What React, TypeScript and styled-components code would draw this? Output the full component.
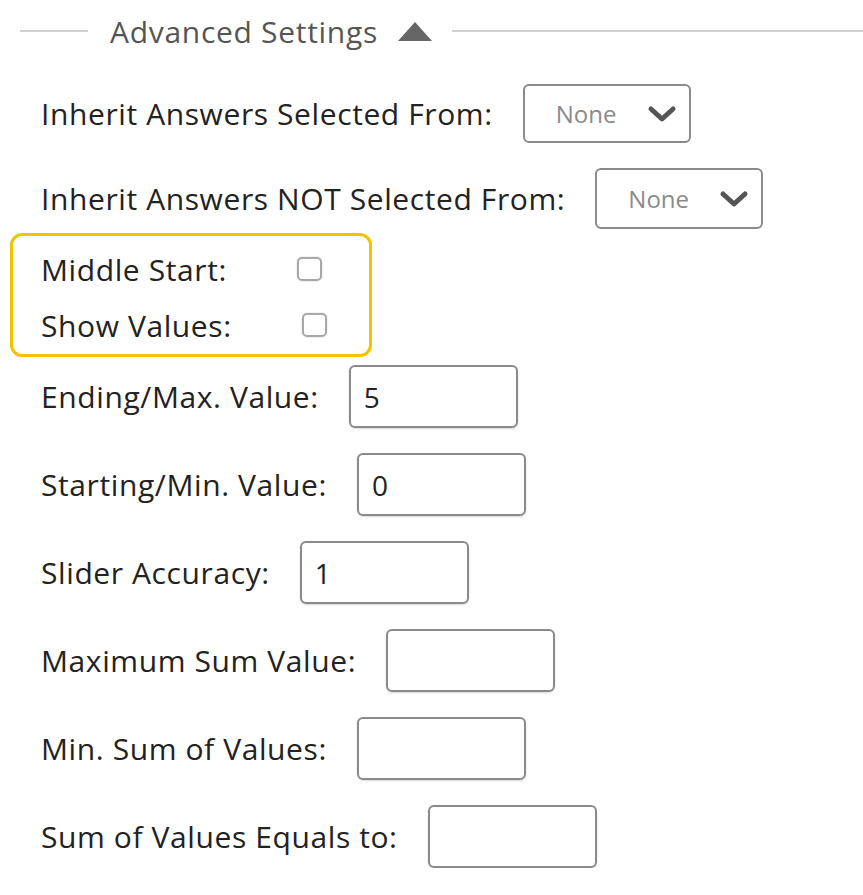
import React from 'react';
import styled, { createGlobalStyle } from 'styled-components';

const GlobalStyle = createGlobalStyle`
  body {
    margin: 0;
    background: #fff;
    font-family: "Open Sans", "Noto Sans", sans-serif;
    color: #222;
  }
`;

const Page = styled.div`
  width: 863px;
  display: flex;
  flex-direction: column;
`;

const Header = styled.div`
  display: flex;
  align-items: center;
  height: 62px;
  padding-left: 20px;
`;

const Line = styled.div<{ $grow?: boolean }>`
  height: 2px;
  background: #d0d0d0;
  width: ${p => (p.$grow ? 'auto' : '68px')};
  flex: ${p => (p.$grow ? '1' : 'none')};
`;

const Title = styled.span`
  font-size: 30px;
  color: #555;
  margin: 0 20px 0 22px;
  letter-spacing: 0.7px;
`;

const Triangle = styled.span`
  width: 0;
  height: 0;
  border-left: 17px solid transparent;
  border-right: 17px solid transparent;
  border-bottom: 19px solid #666;
  margin-right: 20px;
`;

const Row = styled.div<{ $top: number; $h: number }>`
  display: flex;
  align-items: center;
  margin-top: ${p => p.$top}px;
  height: ${p => p.$h}px;
  padding-left: 41px;
`;

const Label = styled.span`
  font-size: 30px;
  letter-spacing: 0.6px;
  color: #222;
  white-space: nowrap;
`;

const SelectBox = styled.div<{ $h: number }>`
  margin-left: 30px;
  width: 168px;
  height: ${p => p.$h}px;
  box-sizing: border-box;
  border: 2px solid #8a8a8a;
  border-radius: 6px;
  display: flex;
  align-items: center;
  padding: 0 12px 0 31px;
  justify-content: space-between;
  font-size: 24px;
  color: #8a8a8a;
`;

const Highlight = styled.div`
  margin: 4px 0 0 10px;
  width: 362px;
  height: 124px;
  box-sizing: border-box;
  border: 3px solid #f5c200;
  border-radius: 12px;
  padding: 13px 0 0 28px;
  display: flex;
  flex-direction: column;
  gap: 16px;
`;

const CheckRow = styled.div`
  display: flex;
  align-items: center;
  height: 40px;
`;

const CheckBox = styled.span`
  margin-left: 70px;
  width: 25px;
  height: 24px;
  box-sizing: border-box;
  border: 2px solid #a8a8a8;
  border-radius: 5px;
  box-shadow: 0 0 2px rgba(0, 0, 0, 0.2);
`;

const TextInput = styled.div`
  margin-left: 30px;
  width: 169px;
  height: 63px;
  box-sizing: border-box;
  border: 2px solid #8a8a8a;
  border-radius: 6px;
  box-shadow: 0 1px 2px rgba(0, 0, 0, 0.15);
  display: flex;
  align-items: center;
  padding-left: 13px;
  font-size: 28px;
  color: #222;
`;

const Chevron = () => (
  <svg width="30" height="20" viewBox="0 0 30 20">
    <path d="M4 5 L15 15 L26 5" fill="none" stroke="#555" strokeWidth="5" strokeLinecap="round" strokeLinejoin="round" />
  </svg>
);

const inputs = [
  { label: 'Ending/Max. Value:', value: '5' },
  { label: 'Starting/Min. Value:', value: '0' },
  { label: 'Slider Accuracy:', value: '1' },
  { label: 'Maximum Sum Value:', value: '' },
  { label: 'Min. Sum of Values:', value: '' },
  { label: 'Sum of Values Equals to:', value: '' },
];

export default function App() {
  return (
    <Page>
      <GlobalStyle />
      <Header>
        <Line />
        <Title>Advanced Settings</Title>
        <Triangle />
        <Line $grow />
      </Header>
      <Row $top={22} $h={59}>
        <Label>Inherit Answers Selected From:</Label>
        <SelectBox $h={59}>
          None
          <Chevron />
        </SelectBox>
      </Row>
      <Row $top={25} $h={61}>
        <Label>Inherit Answers NOT Selected From:</Label>
        <SelectBox $h={61}>
          None
          <Chevron />
        </SelectBox>
      </Row>
      <Highlight>
        <CheckRow>
          <Label>Middle Start:</Label>
          <CheckBox />
        </CheckRow>
        <CheckRow>
          <Label>Show Values:</Label>
          <CheckBox />
        </CheckRow>
      </Highlight>
      {inputs.map((item, i) => (
        <Row key={item.label} $top={i === 0 ? 8 : 25} $h={63}>
          <Label>{item.label}</Label>
          <TextInput>{item.value}</TextInput>
        </Row>
      ))}
    </Page>
  );
}
